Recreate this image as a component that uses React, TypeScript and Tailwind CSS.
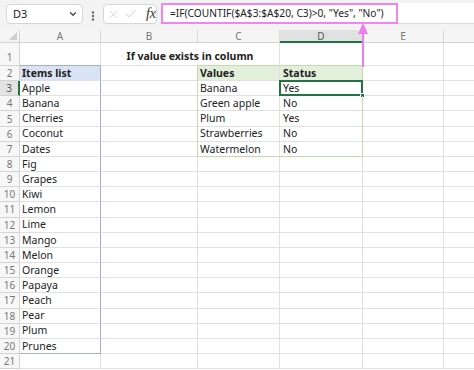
import { ChevronDown, EllipsisVertical, X, Check } from "lucide-react";

const items = [
  "Apple", "Banana", "Cherries", "Coconut", "Dates", "Fig", "Grapes", "Kiwi", "Lemon",
  "Lime", "Mango", "Melon", "Orange", "Papaya", "Peach", "Pear", "Plum", "Prunes",
];

const lookup = [
  ["Banana", "Yes"],
  ["Green apple", "No"],
  ["Plum", "Yes"],
  ["Strawberries", "No"],
  ["Watermelon", "No"],
];

// gridline colour
const grid = "border-[#e1e1e1]";

const RowHead = ({ n }: { n: number }) => (
  <div
    className={`w-[20px] shrink-0 flex items-center justify-center text-[10px] leading-none border-b ${
      n === 3
        ? "bg-[#e3e3e3] text-[#555] border-r-2 border-r-[#217346] border-b-[#d4d4d4]"
        : "bg-[#f7f7f7] text-[#777] border-r border-[#d4d4d4]"
    }`}
  >
    {n}
  </div>
);

const Row = ({ n }: { n: number }) => {
  const a = n === 2 ? "Items list" : n >= 3 && n <= 20 ? items[n - 3] : "";
  const inLookup = n >= 2 && n <= 7;
  const c = n === 2 ? "Values" : inLookup ? lookup[n - 3][0] : "";
  const d = n === 2 ? "Status" : inLookup ? lookup[n - 3][1] : "";
  const inA = n >= 2 && n <= 20;

  return (
    <div className="flex h-[15.16px] leading-none">
      <RowHead n={n} />
      <div
        className={`w-[81px] shrink-0 pl-[2px] flex items-center border-b border-r ${grid} ${
          inA ? "border-r-[#a3aed3]" : ""
        } ${n === 20 ? "border-b-[#a3aed3]" : ""} ${n === 2 ? "bg-[#dae3f3] font-bold" : ""}`}
      >
        {a}
      </div>
      <div className={`w-[97px] shrink-0 border-b border-r ${grid} ${inLookup ? "border-r-[#c3d9ae]" : ""}`} />
      <div
        className={`w-[82px] shrink-0 pl-[2px] flex items-center border-b border-r ${grid} ${
          n === 7 ? "border-b-[#c3d9ae]" : ""
        } ${n === 2 ? "bg-[#e2efda] font-bold" : ""}`}
      >
        {c}
      </div>
      <div
        className={`relative w-[83px] shrink-0 pl-[3px] flex items-center border-b border-r ${grid} ${
          inLookup ? "border-r-[#c3d9ae]" : ""
        } ${n === 7 ? "border-b-[#c3d9ae]" : ""} ${n === 2 ? "bg-[#e2efda] font-bold" : ""}`}
      >
        {d}
        {n === 3 && (
          <div className="absolute -left-px -top-px -right-px -bottom-px border-2 border-[#217346]">
            <div className="absolute -right-[4px] -bottom-[4px] w-[5px] h-[5px] bg-[#217346] border border-white" />
          </div>
        )}
      </div>
      <div className={`w-[81px] shrink-0 border-b border-r ${grid}`} />
      <div className={`flex-1 border-b ${grid}`} />
    </div>
  );
};

export default function App() {
  const rows = Array.from({ length: 20 }, (_, i) => i + 2);

  return (
    <div
      className="relative w-[474px] h-[370px] overflow-hidden bg-white text-[10.5px] text-[#222]"
      style={{ fontFamily: '"Noto Sans", "Open Sans", sans-serif' }}
    >
      {/* formula bar */}
      <div className="h-[30px] bg-[#f3f3f3] flex items-start pt-[3px] pl-[6px] gap-[4px]">
        <div className="mt-[1px] w-[77px] h-[20px] bg-white border border-[#d6d6d6] rounded-[4px] flex items-center justify-between pl-[6px] pr-[4px] text-[11px]">
          <span>D3</span>
          <ChevronDown size={10} strokeWidth={3} className="text-[#444]" />
        </div>
        <EllipsisVertical size={12} strokeWidth={3} className="mt-[7px] text-[#666]" />
        <div className="mt-[1px] w-[54px] h-[20px] bg-white border border-[#d6d6d6] rounded-[4px] flex items-center pl-[3px] gap-[2px]">
          <X size={13} strokeWidth={1.5} className="text-[#c4c4c4]" />
          <Check size={14} strokeWidth={1.5} className="text-[#c4c4c4] ml-[3px]" />
          <span
            className="ml-[6px] italic text-[14px] leading-none text-[#333]"
            style={{ fontFamily: '"Liberation Serif", serif' }}
          >
            fx
          </span>
        </div>
        <div className="flex-1 h-[21px] bg-white border-b border-[#dcdcdc] flex">
          <div className="w-[237px] h-[21px] border-2 border-[#ef86ee] flex items-center pl-[7px] text-[10.2px] whitespace-nowrap">
            =IF(COUNTIF($A$3:$A$20, C3)&gt;0, "Yes", "No")
          </div>
        </div>
      </div>

      {/* column headers */}
      <div className="flex h-[13px] bg-[#f5f5f5] text-[10px] leading-none text-[#777]">
        <div className="w-[20px] shrink-0 border-r border-b border-[#d4d4d4] flex items-end justify-end pr-[2px] pb-[2px]">
          <svg width="8" height="8" viewBox="0 0 8 8">
            <polygon points="8,0 8,8 0,8" fill="#cfcfcf" />
          </svg>
        </div>
        {[
          ["A", 81],
          ["B", 97],
          ["C", 82],
          ["D", 83],
          ["E", 81],
        ].map(([l, w]) => (
          <div
            key={l as string}
            className={`shrink-0 flex items-center justify-center border-r border-[#dadada] ${
              l === "D" ? "bg-[#e1e1e1] border-b-2 border-b-[#217346] text-[#555]" : "border-b border-b-[#d4d4d4]"
            }`}
            style={{ width: w as number }}
          >
            {l}
          </div>
        ))}
        <div className="flex-1 border-b border-[#d4d4d4]" />
      </div>

      {/* row 1 */}
      <div className="flex h-[23px] leading-none">
        <div className="w-[20px] shrink-0 bg-[#f7f7f7] text-[#777] text-[10px] border-r border-b border-[#d4d4d4] flex items-end justify-center pb-[3px]">
          1
        </div>
        <div className={`w-[81px] shrink-0 border-b border-r ${grid} border-b-[#a3aed3]`} />
        <div className={`w-[179px] shrink-0 border-b border-r ${grid} flex items-end justify-center pb-[4px] font-bold`}>
          If value exists in column
        </div>
        <div className={`w-[83px] shrink-0 border-b border-r ${grid} border-b-[#c3d9ae]`} />
        <div className={`w-[81px] shrink-0 border-b border-r ${grid}`} />
        <div className={`flex-1 border-b ${grid}`} />
      </div>
      {/* top edge of the C2:D7 range under C1 */}
      <div className="absolute left-[198px] top-[65px] w-[82px] h-px bg-[#c3d9ae]" />

      {rows.map((n) => (
        <Row key={n} n={n} />
      ))}

      {/* callout arrow */}
      <svg className="absolute left-[357px] top-[23px]" width="12" height="44" viewBox="0 0 12 44">
        <polygon points="6,0 11,11 1,11" fill="#ef7cee" />
        <line x1="6" y1="10" x2="6" y2="44" stroke="#ef7cee" strokeWidth="2" />
      </svg>
    </div>
  );
}
